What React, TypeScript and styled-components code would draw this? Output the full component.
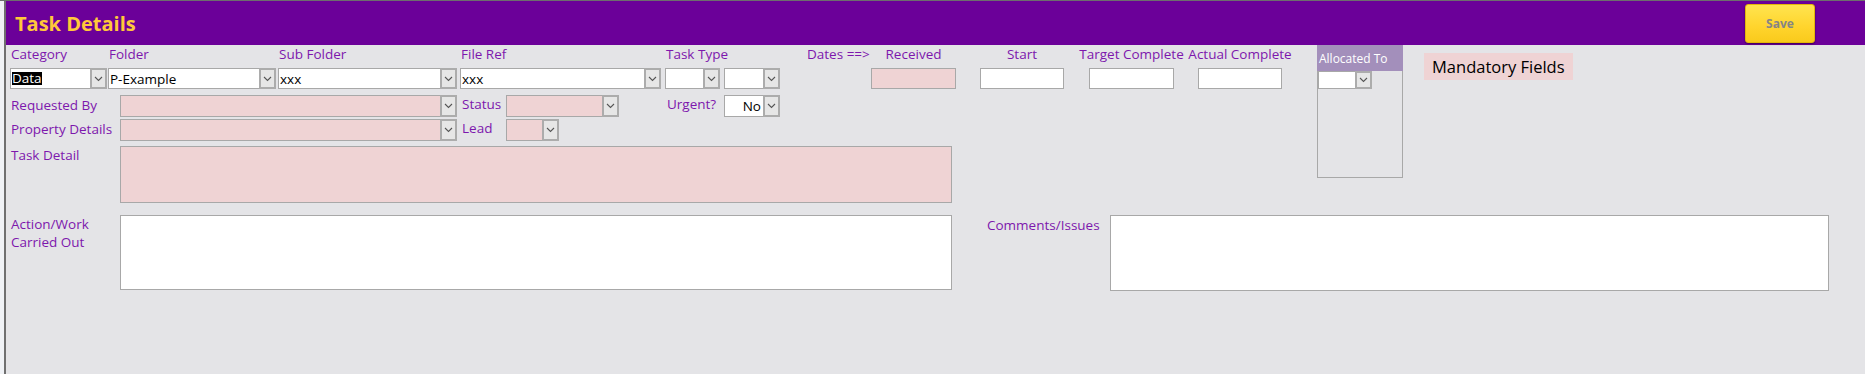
import React from 'react'
import styled, { createGlobalStyle } from 'styled-components'

const GlobalStyle = createGlobalStyle`
  html, body {
    margin: 0;
    padding: 0;
    background: #e4e4e7;
  }
  body {
    font-family: "Open Sans", "Noto Sans", sans-serif;
  }
`;

const Page = styled.div`
  display: flex;
  width: 1865px;
  height: 374px;
  overflow: hidden;
  border-top: 1px solid #6d6d6d;
  box-sizing: border-box;
`;

const LeftStrip = styled.div`
  width: 4px;
  background: #f0f2f6;
  border-right: 2px solid #707070;
  flex-shrink: 0;
`;

const Form = styled.div`
  flex: 1;
  display: flex;
  flex-direction: column;
  background: #e4e4e7;
`;

const Header = styled.header`
  height: 44px;
  background: #6b0099;
  display: flex;
  align-items: center;
  justify-content: space-between;
  padding: 0 50px 0 9px;
`;

const Title = styled.h1`
  margin: 0;
  font-size: 20px;
  font-weight: 700;
  color: #ffc83a;
  line-height: 27px;
`;

const SaveButton = styled.button`
  width: 70px;
  height: 39px;
  margin-top: 1px;
  border: 1px solid #e3b70a;
  border-radius: 3px;
  background: linear-gradient(#ffe44f, #ffd42c 60%, #f9ca1c);
  box-shadow: 0 1px 2px rgba(0, 0, 0, 0.45);
  color: #858585;
  font-family: "Open Sans", sans-serif;
  font-size: 12px;
  font-weight: 700;
  cursor: pointer;
`;

const Body = styled.div`
  padding-left: 4px;
  display: flex;
  flex-direction: column;
`;

const TopSection = styled.div`
  display: flex;
  align-items: flex-start;
`;

const FieldsPane = styled.div`
  width: 1307px;
  display: flex;
  flex-direction: column;
`;

const Row = styled.div<{ $mt?: number; $h: number }>`
  display: flex;
  align-items: flex-start;
  height: ${p => p.$h}px;
  margin-top: ${p => p.$mt ?? 0}px;
`;

const Column = styled.div<{ $w: number; $ml?: number }>`
  width: ${p => p.$w}px;
  margin-left: ${p => p.$ml ?? 0}px;
  display: flex;
  flex-direction: column;
  flex-shrink: 0;
`;

const ColumnLabel = styled.div<{ $center?: boolean }>`
  height: 23px;
  padding: 1px 0 0 ${p => (p.$center ? 0 : 1)}px;
  box-sizing: border-box;
  display: flex;
  justify-content: ${p => (p.$center ? 'center' : 'flex-start')};
  white-space: nowrap;
  font-size: 13.5px;
  line-height: 16px;
  color: #7d17ad;
`;

const InputPair = styled.div`
  display: flex;
  gap: 4px;
`;

const Label = styled.div<{ $w: number; $ml?: number; $pt?: number }>`
  width: ${p => p.$w}px;
  margin-left: ${p => p.$ml ?? 0}px;
  padding: ${p => p.$pt ?? 0}px 0 0 1px;
  box-sizing: border-box;
  flex-shrink: 0;
  font-size: 13.5px;
  line-height: 18px;
  color: #7d17ad;
  white-space: nowrap;
`;

const ComboBox = styled.div<{ $w: number; $h: number; $pink?: boolean }>`
  width: ${p => p.$w}px;
  height: ${p => p.$h}px;
  box-sizing: border-box;
  flex-shrink: 0;
  display: flex;
  border: 1px solid #a8a8a8;
  background: ${p => (p.$pink ? '#efd3d4' : '#ffffff')};
`;

const ComboText = styled.div<{ $right?: boolean }>`
  flex: 1;
  display: flex;
  align-items: center;
  justify-content: ${p => (p.$right ? 'flex-end' : 'flex-start')};
  padding: 0 ${p => (p.$right ? 2 : 0)}px 0 1px;
  font-size: 13.5px;
  color: #000;
  overflow: hidden;
  white-space: nowrap;
`;

const Selected = styled.span`
  background: #000;
  color: #fff;
  line-height: 12px;
  padding: 0 0 1px;
`;

const ComboButton = styled.div`
  width: 17px;
  flex-shrink: 0;
  box-sizing: border-box;
  margin: -1px -1px -1px 0;
  border: 2px solid #acacac;
  background: #e6e6e6;
  display: flex;
  align-items: center;
  justify-content: center;
`;

const TextBox = styled.div<{ $w: number; $h: number; $pink?: boolean; $ml?: number }>`
  width: ${p => p.$w}px;
  height: ${p => p.$h}px;
  margin-left: ${p => p.$ml ?? 0}px;
  box-sizing: border-box;
  flex-shrink: 0;
  border: 1px solid #a8a8a8;
  background: ${p => (p.$pink ? '#efd3d4' : '#ffffff')};
`;

const AllocatedBox = styled.div`
  width: 86px;
  height: 133px;
  box-sizing: border-box;
  border: 1px solid #a8a8a8;
  border-top: none;
  flex-shrink: 0;
  display: flex;
  flex-direction: column;
`;

const AllocatedHeader = styled.div`
  height: 26px;
  margin: 0 -1px;
  background: #a38fbb;
  color: #ffffff;
  font-size: 12px;
  line-height: 16px;
  padding: 6px 0 0 2px;
  box-sizing: border-box;
  white-space: nowrap;
`;

const Mandatory = styled.div`
  margin: 8px 0 0 21px;
  width: 149px;
  height: 27px;
  background: #efd3d4;
  color: #000;
  font-size: 16.5px;
  line-height: 27px;
  padding-left: 8px;
  box-sizing: border-box;
  white-space: nowrap;
`;

const BottomSection = styled.div`
  display: flex;
  align-items: flex-start;
  margin-top: 12px;
`;

const Chevron = () => (
  <svg width="9" height="6" viewBox="0 0 9 6">
    <polyline points="1,1 4.5,4.5 8,1" fill="none" stroke="#555" strokeWidth="1.1" />
  </svg>
)

type ComboProps = {
  w: number
  h?: number
  pink?: boolean
  text?: string
  selected?: boolean
  right?: boolean
}

const Combo: React.FC<ComboProps> = ({ w, h = 21, pink, text, selected, right }) => (
  <ComboBox $w={w} $h={h} $pink={pink}>
    <ComboText $right={right}>{selected ? <Selected>{text}</Selected> : text}</ComboText>
    <ComboButton>
      <Chevron />
    </ComboButton>
  </ComboBox>
)

const App: React.FC = () => {
  return (
    <>
      <GlobalStyle />
      <Page>
        <LeftStrip />
        <Form>
          <Header>
            <Title>Task Details</Title>
            <SaveButton>Save</SaveButton>
          </Header>

          <Body>
            <TopSection>
              <FieldsPane>
                <Row $h={44}>
                  <Column $w={97}>
                    <ColumnLabel>Category</ColumnLabel>
                    <Combo w={97} text="Data" selected />
                  </Column>
                  <Column $w={168} $ml={1}>
                    <ColumnLabel>Folder</ColumnLabel>
                    <Combo w={168} text="P-Example" />
                  </Column>
                  <Column $w={179} $ml={2}>
                    <ColumnLabel>Sub Folder</ColumnLabel>
                    <Combo w={179} text="xxx" />
                  </Column>
                  <Column $w={201} $ml={3}>
                    <ColumnLabel>File Ref</ColumnLabel>
                    <Combo w={201} text="xxx" />
                  </Column>
                  <Column $w={115} $ml={4}>
                    <ColumnLabel>Task Type</ColumnLabel>
                    <InputPair>
                      <Combo w={55} />
                      <Combo w={56} />
                    </InputPair>
                  </Column>
                  <Column $w={65} $ml={26}>
                    <ColumnLabel>Dates ==&gt;</ColumnLabel>
                  </Column>
                  <Column $w={85}>
                    <ColumnLabel $center>Received</ColumnLabel>
                    <TextBox $w={85} $h={21} $pink />
                  </Column>
                  <Column $w={84} $ml={24}>
                    <ColumnLabel $center>Start</ColumnLabel>
                    <TextBox $w={84} $h={21} />
                  </Column>
                  <Column $w={85} $ml={25}>
                    <ColumnLabel $center>Target Complete</ColumnLabel>
                    <TextBox $w={85} $h={21} />
                  </Column>
                  <Column $w={84} $ml={24}>
                    <ColumnLabel $center>Actual Complete</ColumnLabel>
                    <TextBox $w={84} $h={21} />
                  </Column>
                </Row>

                <Row $h={22} $mt={6}>
                  <Label $w={110} $pt={1}>Requested By</Label>
                  <Combo w={337} h={22} pink />
                  <Label $w={45} $ml={4} $pt={0}>Status</Label>
                  <Combo w={113} h={22} pink />
                  <Label $w={58} $ml={47} $pt={0}>Urgent?</Label>
                  <Combo w={56} h={22} text="No" right />
                </Row>

                <Row $h={22} $mt={2}>
                  <Label $w={110} $pt={1}>Property Details</Label>
                  <Combo w={337} h={22} pink />
                  <Label $w={45} $ml={4} $pt={0}>Lead</Label>
                  <Combo w={53} h={22} pink />
                </Row>

                <Row $h={57} $mt={5}>
                  <Label $w={110}>Task Detail</Label>
                  <TextBox $w={832} $h={57} $pink />
                </Row>
              </FieldsPane>

              <AllocatedBox>
                <AllocatedHeader>Allocated To</AllocatedHeader>
                <Combo w={54} h={18} />
              </AllocatedBox>

              <Mandatory>Mandatory Fields</Mandatory>
            </TopSection>

            <BottomSection>
              <Label $w={110}>
                Action/Work
                <br />
                Carried Out
              </Label>
              <TextBox $w={832} $h={75} />
              <Label $w={124} $ml={34} $pt={1}>Comments/Issues</Label>
              <TextBox $w={719} $h={76} />
            </BottomSection>
          </Body>
        </Form>
      </Page>
    </>
  )
}

export default App
